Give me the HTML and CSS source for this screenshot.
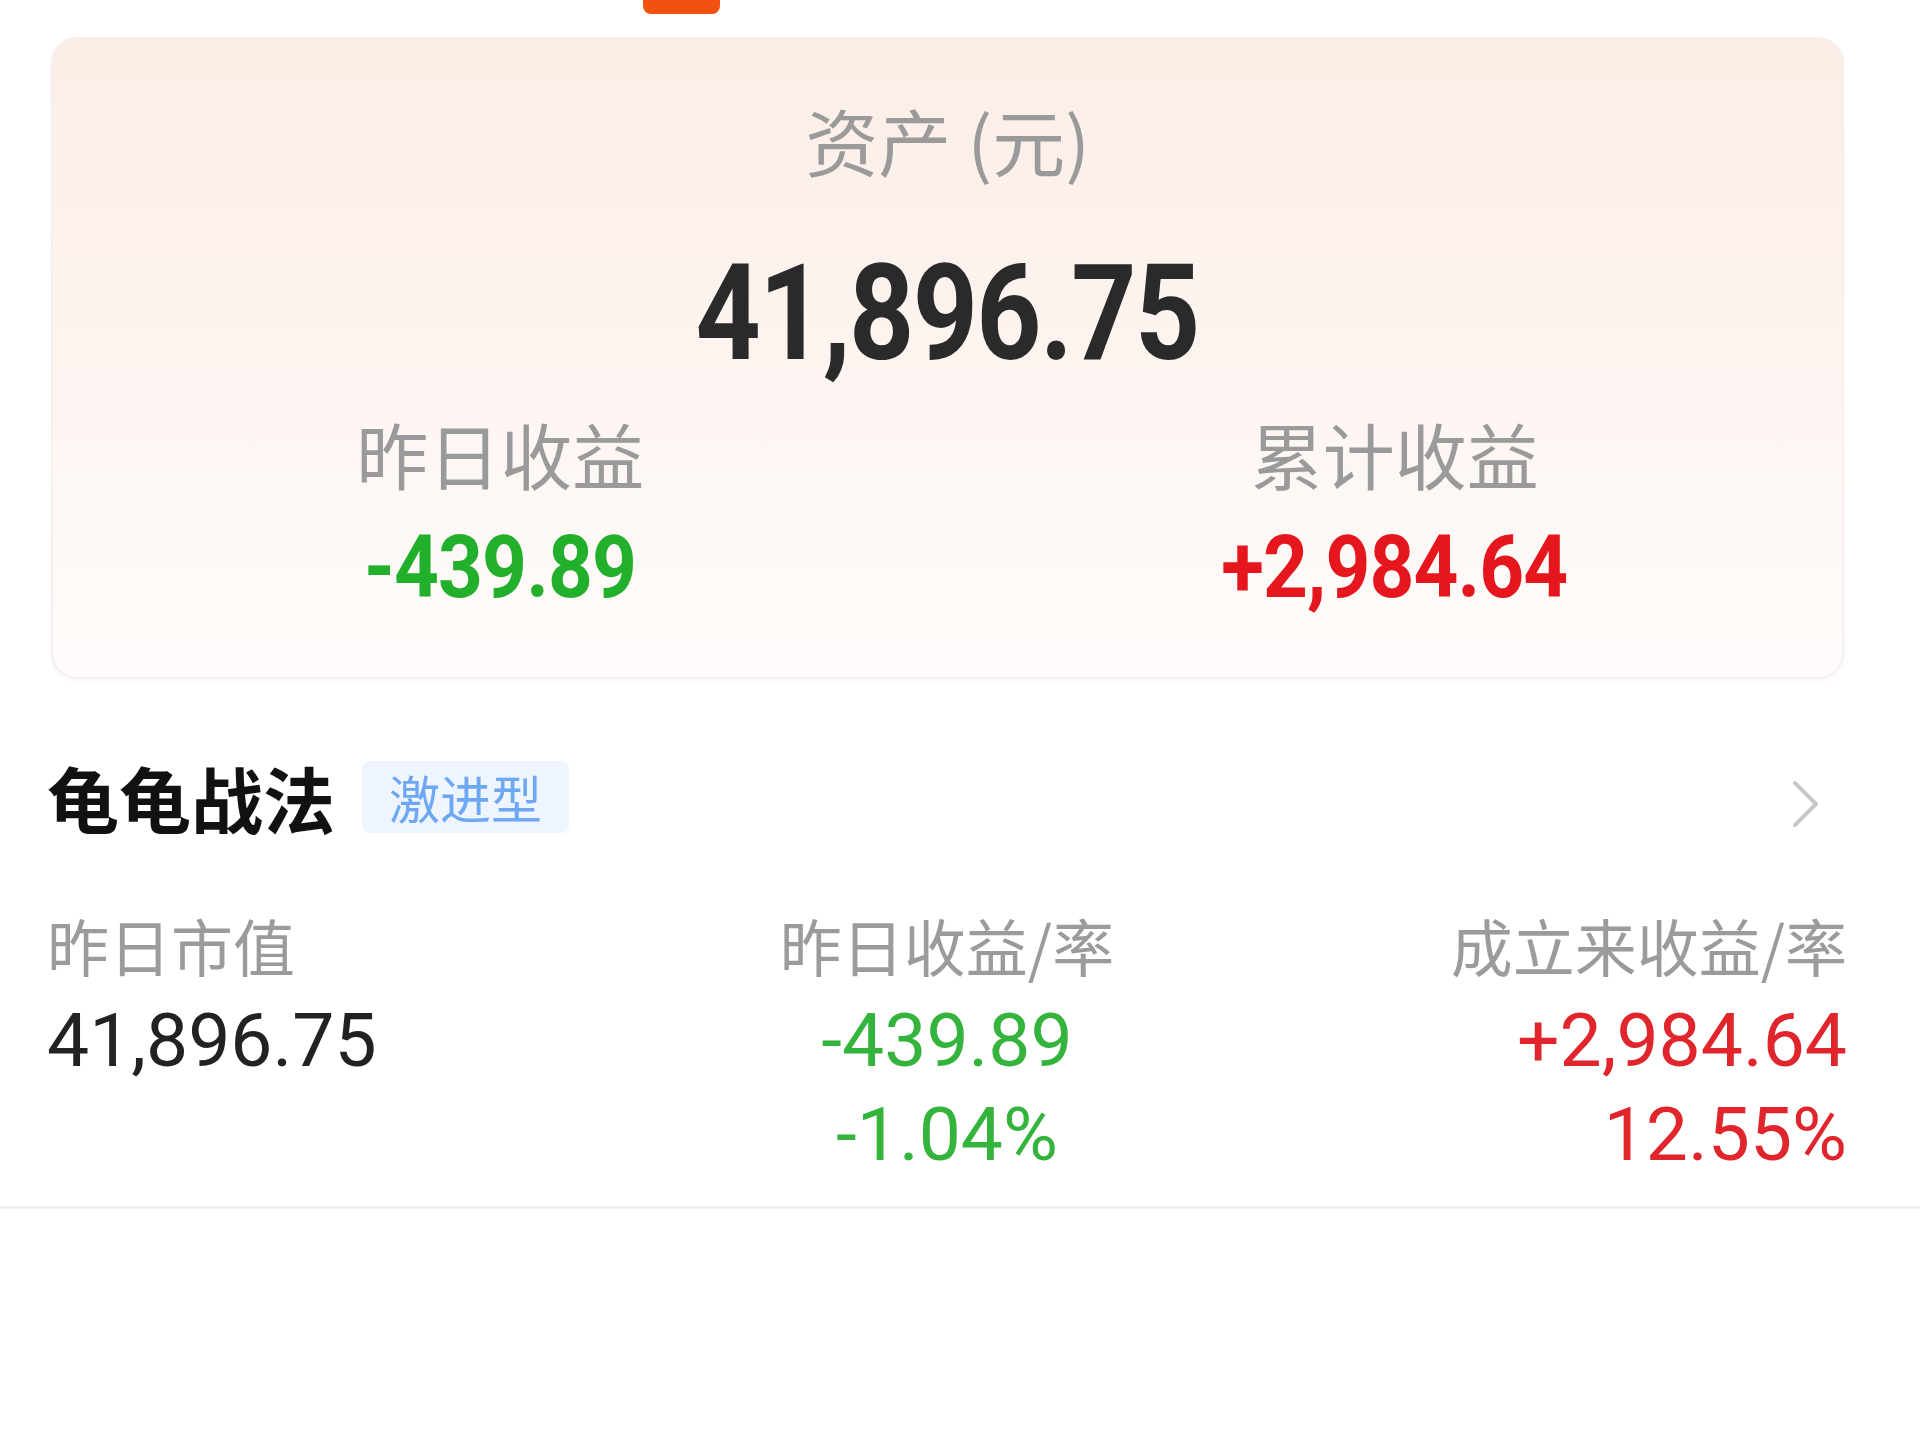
FILE: index.html
```html
<!DOCTYPE html>
<html lang="zh-CN">
<head>
    <meta charset="UTF-8">
    <meta name="viewport" content="width=device-width, initial-scale=1.0">
    <title>资产</title>
    <link rel="stylesheet" href="styles.css">
</head>
<body>
    <div class="page">
        <div class="tabbar"><span class="tab-indicator"></span></div>

        <div class="asset-card">
            <p class="asset-title">资产 (元)</p>
            <p class="asset-total"><span>41,896.75</span></p>
            <div class="asset-stats">
                <div class="stat">
                    <p class="stat-label">昨日收益</p>
                    <p class="stat-value down"><span>-439.89</span></p>
                </div>
                <div class="stat">
                    <p class="stat-label">累计收益</p>
                    <p class="stat-value up"><span>+2,984.64</span></p>
                </div>
            </div>
        </div>

        <div class="strategy">
            <div class="strategy-head">
                <h2 class="strategy-name">龟龟战法</h2>
                <span class="strategy-tag">激进型</span>
                <svg class="chevron" width="30" height="50" viewBox="0 0 30 50">
                    <polyline points="4,4 25,25 4,46" fill="none" stroke="#c8c8c8" stroke-width="4" stroke-linecap="round" stroke-linejoin="round"/>
                </svg>
            </div>
            <div class="strategy-grid">
                <div class="col col-left">
                    <p class="col-label">昨日市值</p>
                    <p class="col-value">41,896.75</p>
                </div>
                <div class="col col-mid">
                    <p class="col-label">昨日收益/率</p>
                    <p class="col-value down">-439.89</p>
                    <p class="col-value down">-1.04%</p>
                </div>
                <div class="col col-right">
                    <p class="col-label">成立来收益/率</p>
                    <p class="col-value up">+2,984.64</p>
                    <p class="col-value up">12.55%</p>
                </div>
            </div>
        </div>
    </div>
    <div class="divider"></div>
</body>
</html>
```

FILE: styles.css
```css
body {
    margin: 0;
    background-color: #ffffff;
    font-family: "Noto Sans CJK SC", "Noto Sans", sans-serif;
    color: #222222;
}
p, h2 {
    margin: 0;
}
.page {
    padding: 0 73px 0 47px;
}
.tabbar {
    height: 37px;
}
.tab-indicator {
    display: block;
    width: 77px;
    height: 14px;
    margin-left: 596px;
    border-radius: 0 0 8px 8px;
    background-color: #f1520f;
}
.asset-card {
    margin: 0 3px 0 4px;
    padding: 55px 0 60px;
    border: 2px solid #f5f0ee;
    border-radius: 26px;
    background: linear-gradient(180deg, #fcede6 0%, #fdf4f0 50%, #fefcfb 100%);
    box-shadow: 0 2px 6px rgba(0, 0, 0, 0.03);
    text-align: center;
}
.asset-title {
    font-size: 73px;
    line-height: 90px;
    color: #9a9a9a;
}
.asset-total {
    margin-top: 55px;
    font-family: Roboto, sans-serif;
    font-weight: 700;
    font-size: 134px;
    line-height: 150px;
    color: #2a2a2a;
}
.asset-total span, .stat-value span {
    display: inline-block;
    transform: scaleX(0.85);
    letter-spacing: -2px;
}
.asset-stats {
    display: grid;
    grid-template-columns: 1fr 1fr;
    margin-top: 19px;
}
.stat-label {
    font-size: 72px;
    line-height: 90px;
    color: #9a9a9a;
}
.stat-value {
    margin-top: 19px;
    font-family: Roboto, sans-serif;
    font-weight: 700;
    font-size: 87px;
    line-height: 100px;
}
.stat-value span {
    transform: scaleX(0.9);
    letter-spacing: -1px;
}
.down {
    color: #22b02c;
}
.up {
    color: #e5161e;
}
.strategy {
    margin-top: 80px;
}
.strategy-head {
    display: flex;
    align-items: center;
    height: 75px;
}
.strategy-name {
    font-size: 72px;
    font-weight: 700;
    line-height: 75px;
    color: #111111;
}
.strategy-tag {
    margin-left: 27px;
    padding: 0 27px;
    height: 72px;
    line-height: 72px;
    border-radius: 8px;
    font-size: 51px;
    color: #6ea8f2;
    background-color: #eef5fe;
}
.chevron {
    margin: 14px 26px 0 auto;
}
.strategy-grid {
    display: grid;
    grid-template-columns: 1fr 1fr 1fr;
    margin-top: 66px;
}
.col-left {
    text-align: left;
}
.col-mid {
    text-align: center;
}
.col-right {
    text-align: right;
}
.col-label {
    font-size: 62px;
    line-height: 90px;
    color: #9b9b9b;
    margin-bottom: 3px;
}
.col-value {
    font-family: Roboto, sans-serif;
    font-size: 75px;
    line-height: 94px;
}
.col-value.down {
    color: #34b43c;
}
.col-value.up {
    color: #e0262c;
}
.divider {
    margin-top: 25px;
    height: 3px;
    background-color: #f1f1f1;
}
```
